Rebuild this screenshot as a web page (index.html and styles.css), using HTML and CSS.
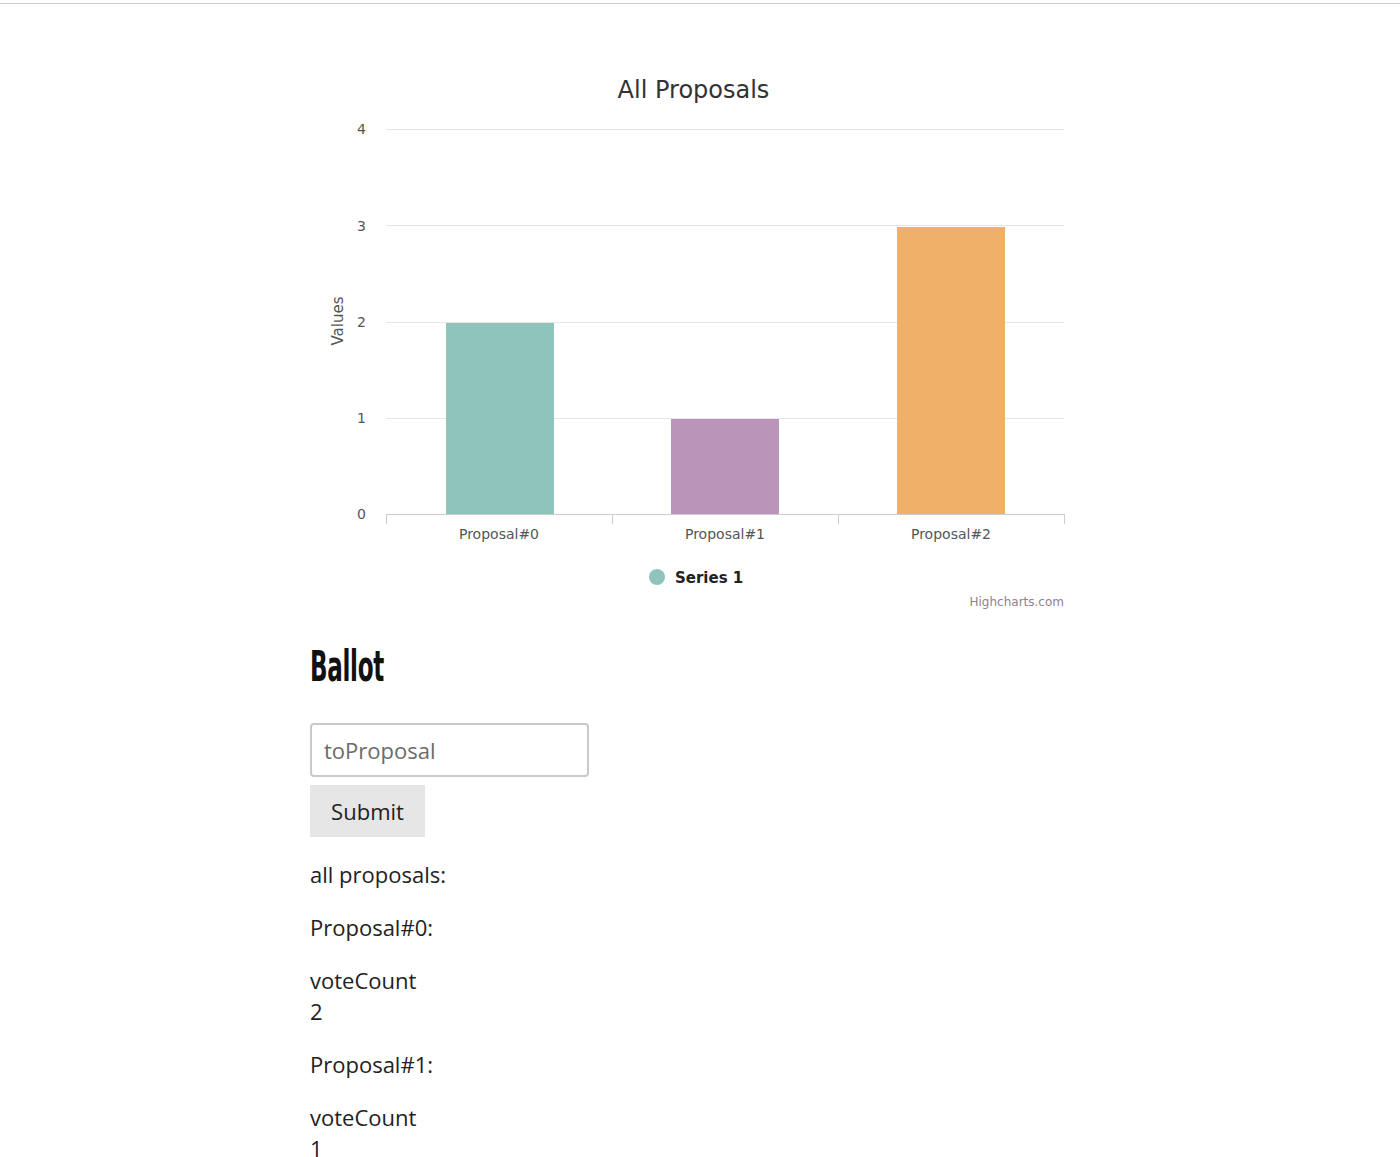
FILE: index.html
```html
<!DOCTYPE html>
<html lang="en">
<head>
<meta charset="utf-8">
<title>Ballot</title>
<link rel="stylesheet" href="styles.css">
</head>
<body>
<div class="topline"></div>
<main class="container">
  <svg class="chart" width="780" height="620" viewBox="0 0 780 620" xmlns="http://www.w3.org/2000/svg">
    <text class="chart-title" x="383.5" y="94" text-anchor="middle">All Proposals</text>
    <g class="grid">
      <line x1="76" y1="125.5" x2="754" y2="125.5"/>
      <line x1="76" y1="221.5" x2="754" y2="221.5"/>
      <line x1="76" y1="318.5" x2="754" y2="318.5"/>
      <line x1="76" y1="414.5" x2="754" y2="414.5"/>
    </g>
    <g class="ylabels">
      <text x="56" y="130" text-anchor="end">4</text>
      <text x="56" y="226.5" text-anchor="end">3</text>
      <text x="56" y="323" text-anchor="end">2</text>
      <text x="56" y="419" text-anchor="end">1</text>
      <text x="56" y="515" text-anchor="end">0</text>
    </g>
    <text class="ytitle" x="32.5" y="317" text-anchor="middle" transform="rotate(-90 32.5 317)">Values</text>
    <rect x="136" y="319" width="108" height="191" fill="#8fc4bd"/>
    <rect x="361" y="415" width="108" height="95" fill="#bb95b9"/>
    <rect x="587" y="223" width="108" height="287" fill="#f0b06a"/>
    <g class="axis">
      <line x1="76" y1="510.5" x2="754" y2="510.5"/>
      <line x1="76.5" y1="510" x2="76.5" y2="520"/>
      <line x1="302.5" y1="510" x2="302.5" y2="520"/>
      <line x1="528.5" y1="510" x2="528.5" y2="520"/>
      <line x1="754.5" y1="510" x2="754.5" y2="520"/>
    </g>
    <g class="xlabels">
      <text x="189" y="535" text-anchor="middle">Proposal#0</text>
      <text x="415" y="535" text-anchor="middle">Proposal#1</text>
      <text x="641" y="535" text-anchor="middle">Proposal#2</text>
    </g>
    <circle cx="347" cy="573" r="8" fill="#8fc4bd"/>
    <text class="legend" x="365" y="579">Series 1</text>
    <text class="credits" x="754" y="602" text-anchor="end">Highcharts.com</text>
  </svg>

  <h1 class="heading">Ballot</h1>

  <form class="ballot-form">
    <input class="field" type="text" placeholder="toProposal">
    <button class="submit" type="button">Submit</button>
  </form>

  <p class="line">all proposals:</p>
  <p class="line">Proposal#0:</p>
  <p class="line">voteCount<br>2</p>
  <p class="line">Proposal#1:</p>
  <p class="line">voteCount<br>1</p>
</main>
</body>
</html>
```
FILE: styles.css
```css
html, body {
  margin: 0;
  padding: 0;
  overflow: hidden;
  background: #ffffff;
}

body {
  font-family: "Open Sans", "DejaVu Sans", sans-serif;
  color: #222222;
}

.topline {
  height: 3px;
  border-bottom: 1px solid #cccccc;
}

.container {
  width: 780px;
  margin: 0 auto;
}

.chart {
  display: block;
  font-family: "DejaVu Sans", Verdana, sans-serif;
}

.chart-title {
  font-size: 24px;
  fill: #333333;
}

.grid line {
  stroke: #e6e6e6;
  stroke-width: 1;
}

.axis line {
  stroke: #cccccc;
  stroke-width: 1;
}

.ylabels text,
.xlabels text {
  font-size: 14px;
  fill: #555555;
}

.ytitle {
  font-size: 15px;
  fill: #555555;
}

.legend {
  font-size: 15px;
  font-weight: bold;
  fill: #222222;
}

.credits {
  font-size: 12px;
  fill: #8f7f92;
}

.heading {
  margin: 22px 0 35px;
  height: 42px;
  font-family: "DejaVu Sans", sans-serif;
  font-stretch: condensed;
  font-weight: bold;
  font-size: 42px;
  line-height: 42px;
  color: #111111;
  transform: scaleX(0.61);
  transform-origin: left center;
  letter-spacing: -0.5px;
}

.ballot-form {
  display: flex;
  flex-direction: column;
  align-items: flex-start;
  gap: 8px;
  margin: 0;
}

.field {
  box-sizing: border-box;
  width: 279px;
  height: 54px;
  margin: 0;
  padding: 0 12px;
  border: 2px solid #c9c9c9;
  border-radius: 4px;
  font-family: "Open Sans", sans-serif;
  font-size: 22px;
  color: #222222;
  background: #ffffff;
}

.field::placeholder {
  color: #6b6b6b;
}

.submit {
  box-sizing: border-box;
  width: 115px;
  height: 52px;
  margin: 0;
  padding: 0;
  border: none;
  border-radius: 0;
  background: #e6e6e6;
  font-family: "Open Sans", sans-serif;
  font-size: 22px;
  color: #222222;
}

.line {
  margin: 22px 0;
  font-size: 22px;
  line-height: 31px;
}
```
